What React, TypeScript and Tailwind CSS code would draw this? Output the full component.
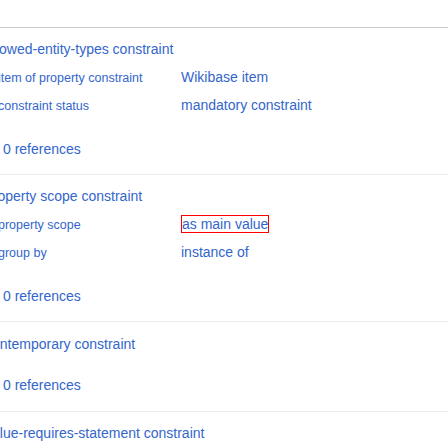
import React from 'react';

type Qualifier = {
  name: string;
  value: string;
  boxed?: boolean;
};

type Constraint = {
  title: string;
  qualifiers: Qualifier[];
  refs?: string;
};

const constraints: Constraint[] = [
  {
    title: 'allowed-entity-types constraint',
    qualifiers: [
      { name: 'item of property constraint', value: 'Wikibase item' },
      { name: 'constraint status', value: 'mandatory constraint' },
    ],
    refs: '0 references',
  },
  {
    title: 'property scope constraint',
    qualifiers: [
      { name: 'property scope', value: 'as main value', boxed: true },
      { name: 'group by', value: 'instance of' },
    ],
    refs: '0 references',
  },
  {
    title: 'contemporary constraint',
    qualifiers: [],
    refs: '0 references',
  },
  {
    title: 'value-requires-statement constraint',
    qualifiers: [],
  },
];

const ConstraintGroup: React.FC<{ item: Constraint; index: number }> = ({ item, index }) => {
  const hasQualifiers = item.qualifiers.length > 0;
  // third group sits one pixel lower in the screenshot
  const top = index === 2 ? 'pt-[12px]' : 'pt-[11px]';
  const bottom = index === 2 ? 'pb-[16px]' : 'pb-[15px]';

  return (
    <div className={`${top} ${item.refs ? `${bottom} border-b border-[#eaecf0]` : ''}`}>
      <div className="h-5 leading-5 ml-[-15px] whitespace-nowrap">{item.title}</div>

      {item.qualifiers.map((q) => (
        <div key={q.name} className="flex items-baseline h-5 leading-5 mt-2 ml-[-2px] whitespace-nowrap">
          <div className="w-[183px] shrink-0 text-[12.5px]">{q.name}</div>
          <div>
            {q.boxed ? <span className="border border-[#ff0000]">{q.value}</span> : q.value}
          </div>
        </div>
      ))}

      {item.refs && (
        <div
          className={`h-5 leading-5 pl-[3px] ${
            hasQualifiers ? 'mt-6' : 'mt-[21px]'
          }`}
        >
          {item.refs}
        </div>
      )}
    </div>
  );
};

export default function App() {
  return (
    <div
      className="w-[448px] h-[448px] overflow-hidden bg-white text-[14px] text-[#3366cc]"
      style={{ fontFamily: '"Liberation Sans", Arial, sans-serif' }}
    >
      <div className="h-[28px] border-b border-[#c8ccd1]" />
      {constraints.map((c, i) => (
        <ConstraintGroup key={c.title} item={c} index={i} />
      ))}
    </div>
  );
}
